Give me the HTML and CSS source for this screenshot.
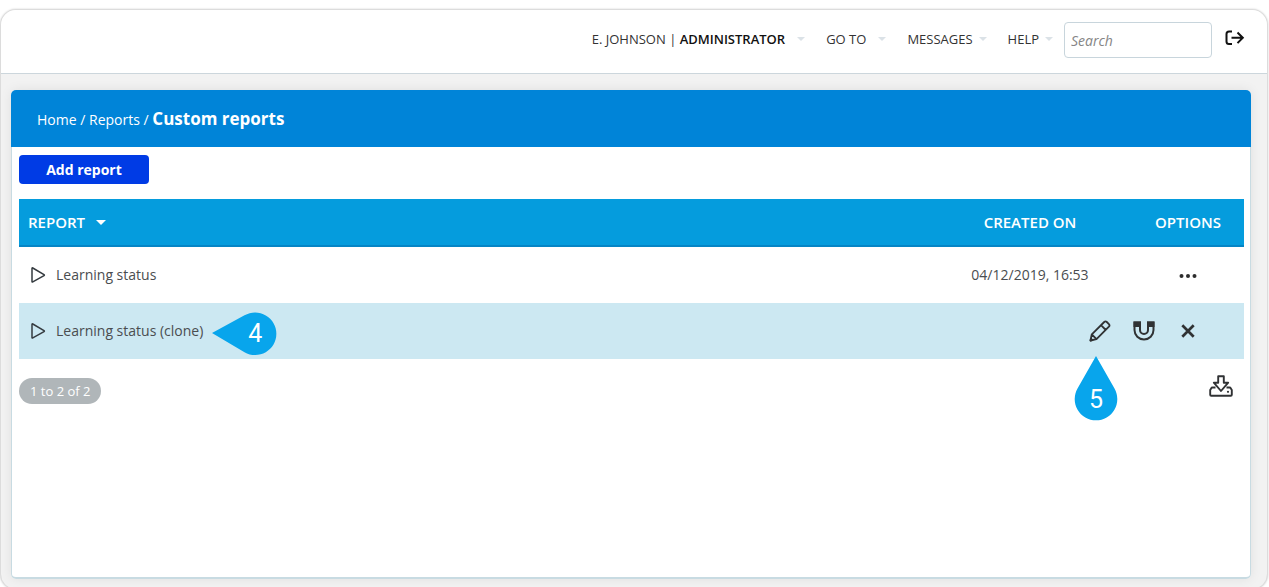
FILE: index.html
```html
<!DOCTYPE html>
<html lang="en">
<head>
<meta charset="utf-8">
<meta name="viewport" content="width=device-width, initial-scale=1">
<title>Custom reports</title>
<link rel="stylesheet" href="styles.css">
</head>
<body>
<div class="app">
  <header class="topbar">
    <nav class="menu" aria-label="Main">
      <a class="menu-item wide" href="#"><span>E. JOHNSON | <strong>ADMINISTRATOR</strong></span><span class="caret"></span></a>
      <a class="menu-item wide" href="#">GO TO<span class="caret"></span></a>
      <a class="menu-item" href="#">MESSAGES<span class="caret"></span></a>
      <a class="menu-item" href="#">HELP<span class="caret"></span></a>
    </nav>
    <input class="search" type="search" placeholder="Search" aria-label="Search">
    <button class="icon-button logout" type="button" aria-label="Log out">
      <svg width="20" height="16" viewBox="0 0 20 16" fill="none" stroke="#111" stroke-width="2"><path d="M7 1.500H4Q1.500 1.500 1.500 4v7.500Q1.500 14 4 14h3M6.500 7.800h11M12.500 2.500l5.300 5.300-5.300 5.300"/></svg>
    </button>
  </header>
  <main class="panel">
    <nav class="breadcrumb" aria-label="Breadcrumb">
      <a href="#">Home</a> / <a href="#">Reports</a> / <strong>Custom reports</strong>
    </nav>
    <div class="content">
      <button class="add" type="button">Add report</button>
      <table class="reports">
        <thead>
          <tr><th class="name-col">REPORT<span class="sort"></span></th><th class="date-col">CREATED ON</th><th class="options-col">OPTIONS</th></tr>
        </thead>
        <tbody>
          <tr>
            <td><div class="name"><svg class="play" width="16" height="18" viewBox="0 0 16 18"><path d="M2 2.500v13q0 .8.800.4L14 9.700q.8-.5 0-1L2.800 2q-.8-.4-.8.500z"/></svg><a href="#">Learning status</a></div></td>
            <td class="center">04/12/2019, 16:53</td>
            <td class="center"><button class="icon-button more" type="button" aria-label="More options"><svg width="20" height="6" viewBox="0 0 20 6" fill="#2d2d2d"><circle cx="3.500" cy="3" r="2"/><circle cx="10" cy="3" r="2"/><circle cx="16.500" cy="3" r="2"/></svg></button></td>
          </tr>
          <tr class="active">
            <td><div class="name"><svg class="play" width="16" height="18" viewBox="0 0 16 18"><path d="M2 2.500v13q0 .8.800.4L14 9.700q.8-.5 0-1L2.800 2q-.8-.4-.8.500z"/></svg><a href="#">Learning status (clone)</a>
              <span class="anchor"><span class="callout callout-left"><svg width="66" height="44" viewBox="0 0 66 44"><path fill="#08a5ec" d="M1 21L33.500 3.300A21.300 21.300 0 1 1 33.500 40.300Z"/></svg><b>4</b></span></span></div></td>
            <td colspan="2">
              <div class="actions">
                <button class="icon-button action" type="button" aria-label="Edit">
                  <svg width="22" height="22" viewBox="0 0 22 22" fill="none" stroke="#303234" stroke-width="1.800" stroke-linejoin="round"><path d="M1.500 20.500l1.300-6.200L15.200 2q1.300-1.200 2.600 0l2.100 2.100q1.200 1.300 0 2.600L7.500 19.200zM2.800 14.300l4.700 4.900M12 5.200l4.800 4.800"/><path fill="#303234" d="M1.500 20.500l.4-1.900 1.500 1.500z"/></svg>
                  <span class="callout callout-up"><svg width="44" height="66" viewBox="0 0 44 66"><path fill="#08a5ec" d="M22 1L40.500 33.500A21.300 21.300 0 1 1 3.500 33.500Z"/></svg><b>5</b></span>
                </button>
                <button class="icon-button action" type="button" aria-label="Clone">
                  <svg width="22" height="20" viewBox="0 0 22 20" fill="none" stroke="#303234" stroke-width="2"><path d="M1.500 1.500h5.500v7.500a4 4 0 0 0 8 0v-7.500h5.500v7.500a9.500 9.500 0 0 1-19 0z"/><path fill="#303234" d="M1.500 1.500h5.500v3.500h-5.500zM15 1.500h5.500v3.500h-5.500z"/></svg>
                </button>
                <button class="icon-button action" type="button" aria-label="Delete">
                  <svg width="14" height="14" viewBox="0 0 14 14" stroke="#303234" stroke-width="2.700"><path d="M1.300 1.300l11.400 11.400M12.700 1.300L1.300 12.700"/></svg>
                </button>
              </div>
            </td>
          </tr>
        </tbody>
      </table>
      <div class="table-footer">
        <span class="count">1 to 2 of 2</span>
        <button class="icon-button" type="button" aria-label="Download">
          <svg width="24" height="22" viewBox="0 0 24 22" fill="none" stroke="#303234" stroke-width="1.900" stroke-linejoin="round"><path d="M6.500 12.500H3.500Q2.600 12.500 2.300 13.300L1.200 15v4.700q0 1 1 1h19.600q1 0 1-1V15l-1.100-1.700q-.3-.8-1.200-.8h-3M9.200 1.200h5.600v6.500h4.400L12 16 4.800 7.700h4.400z"/><circle cx="19" cy="16.800" r="1.100" fill="#303234" stroke="none"/></svg>
        </button>
      </div>
    </div>
  </main>
</div>
</body>
</html>
```
FILE: styles.css
```css
* { box-sizing: border-box; }
body {
  margin: 0;
  height: 100vh;
  padding-top: 9px;
  overflow: hidden;
  display: flex;
  background: #fff;
  color: #4a4d50;
  font: 14px/20px "Open Sans", "Noto Sans", sans-serif;
}
a { color: inherit; text-decoration: none; }
button, input { font: inherit; }
.app {
  flex: 1;
  min-width: 0;
  display: flex;
  flex-direction: column;
  margin: 0 1px -3px 0;
  border: 1px solid #dcdcdc;
  border-radius: 16px;
  background: #f2f2f2;
  box-shadow: 0 0 2px #ccc;
}
.topbar {
  display: flex;
  justify-content: flex-end;
  align-items: flex-start;
  height: 64px;
  padding: 12px 22px 0 0;
  background: #fff;
  border-bottom: 1px solid #ccd6dc;
  border-radius: 15px 15px 0 0;
}
.menu { display: flex; gap: 21px; padding: 7px 11px 0 0; font-size: 13px; }
.menu-item { display: flex; align-items: center; gap: 6px; color: #333; white-space: nowrap; }
.menu-item.wide { gap: 12px; }
.menu-item strong { font-weight: 600; color: #111; }
.caret { border: 4px solid transparent; border-top-color: #dbe2e7; border-bottom: 0; }
.search {
  width: 148px;
  height: 36px;
  padding: 0 6px;
  border: 1px solid #c8d5dc;
  border-radius: 4px;
  outline: 0;
  background: #fff;
}
.search::placeholder { color: #858585; font-style: italic; opacity: 1; }
.icon-button {
  display: inline-flex;
  align-items: center;
  justify-content: center;
  padding: 0;
  border: 0;
  background: none;
}
.logout { margin: 8px 0 0 13px; }
.panel {
  flex: 1;
  display: flex;
  flex-direction: column;
  margin: 16px 16px 10px 10px;
  border-radius: 5px;
  background: #fff;
  box-shadow: 0 0 12px rgba(0, 0, 0, .08);
}
.breadcrumb {
  height: 57px;
  padding: 17px 26px;
  line-height: 24px;
  background: #0084d8;
  border-radius: 5px 5px 0 0;
  color: #fff;
}
.breadcrumb strong { font-size: 17px; font-weight: 700; }
.content {
  flex: 1;
  padding: 8px 6px 0 7px;
  border: 1px solid #c8dbe2;
  border-top: 0;
  border-bottom-width: 2px;
  border-radius: 0 0 5px 5px;
}
.add {
  display: block;
  width: 130px;
  height: 29px;
  padding: 0;
  border: 0;
  border-radius: 4px;
  background: #003be5;
  color: #fff;
  font-weight: 700;
}
.reports { width: 100%; margin-top: 15px; border-spacing: 0; table-layout: fixed; }
.reports th {
  height: 48px;
  padding: 0;
  border-bottom: 2px solid #0585c5;
  background: #059cdd;
  color: #fff;
  font-size: 15px;
  font-weight: 600;
}
.reports .name-col { padding-left: 9px; text-align: left; }
.date-col { width: 204px; }
.options-col { width: 112px; }
.sort { display: inline-block; margin-left: 11px; border: 5px solid transparent; border-top-color: #fff; border-bottom: 0; vertical-align: 3px; }
.reports td { height: 56px; padding: 0; }
.reports .center { text-align: center; }
.more { height: 20px; vertical-align: middle; }
.name { display: flex; align-items: center; padding-left: 11px; }
.play { margin-right: 10px; fill: none; stroke: #353b40; stroke-width: 1.5px; }
.active { background: #cce8f2; }
.actions { display: flex; justify-content: flex-end; padding-right: 34px; }
.action { position: relative; width: 44px; height: 24px; }
.anchor { position: relative; width: 0; height: 0; }
.callout { position: absolute; color: #fff; }
.callout svg { display: block; }
.callout b { position: absolute; width: 44px; text-align: center; font: 400 25px/44px Roboto, sans-serif; }
.callout-left { left: 8px; top: -19px; }
.callout-left b { right: 0; top: 0; }
.callout-up { left: -4px; top: 36px; }
.callout-up b { left: 0; bottom: -1px; }
.table-footer { display: flex; justify-content: space-between; align-items: flex-start; padding: 16px 11px 0 0; }
.count { margin-top: 3px; padding: 3px 11px; border-radius: 13px; background: #b0b6b9; color: #fff; font-size: 13px; }
```
